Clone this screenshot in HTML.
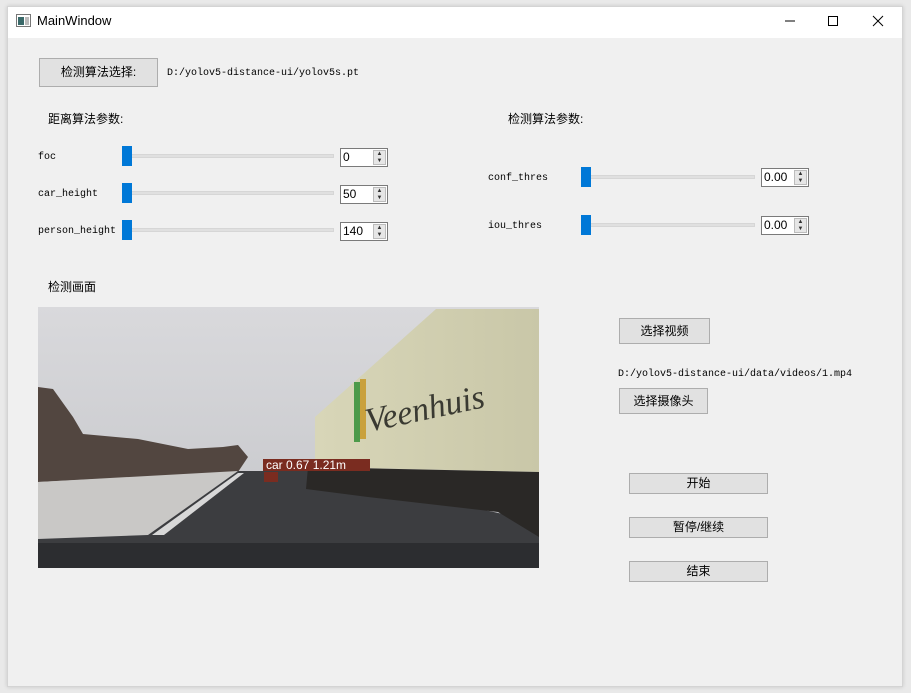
<!DOCTYPE html>
<html><head><meta charset="utf-8"><style>
*{margin:0;padding:0;box-sizing:border-box}
body{width:911px;height:693px;background:#e9e9e9;position:relative;overflow:hidden;font-family:"Liberation Sans","Noto Sans CJK SC",sans-serif;font-size:12px;color:#000}
.win{position:absolute;left:7px;top:6px;width:896px;height:681px;background:#f0f0f0;border:1px solid #d4d4d4;box-shadow:0 0 4px rgba(0,0,0,.15)}
.title{position:absolute;left:0;top:0;width:100%;height:31px;background:#fff}
.a{position:absolute;white-space:nowrap}
.mono{font-family:"Liberation Mono","Noto Sans CJK SC",monospace;font-size:10px}
.btn{position:absolute;background:#e1e1e1;border:1px solid #adadad;text-align:center;font-size:12px}
.h{position:absolute;width:10px;height:20px;background:#0078d7}
.g{position:absolute;height:4px;background:#e0e0e0;border:1px solid #d6d6d6}
.sp{position:absolute;height:19px;background:#fff;border:1px solid #7a7a7a;font-size:12px;padding-left:2px;line-height:17px}
.sp i{position:absolute;right:1px;top:1px;width:13px;height:15px;background:#e6e6e6;border:1px solid #bcbcbc;font-style:normal;font-size:6px;line-height:7px;text-align:center;color:#333}
</style></head><body>
<div class="win">
<div class="title"></div>
</div>
<svg class="a" style="left:16px;top:14px" width="15" height="13"><rect x=".5" y=".5" width="14" height="12" fill="#fff" stroke="#777"/><rect x="2" y="3" width="6" height="8" fill="#3a6a6a"/><rect x="9" y="3" width="4" height="8" fill="#bbb"/></svg>
<div class="a" style="left:37px;top:13px;font-size:13px">MainWindow</div>
<svg class="a" style="left:780px;top:12px" width="110" height="18"><line x1="5" y1="9" x2="15" y2="9" stroke="#000"/><rect x="48.5" y="4.5" width="9" height="9" fill="none" stroke="#000"/><line x1="93" y1="4" x2="103" y2="14" stroke="#000"/><line x1="103" y1="4" x2="93" y2="14" stroke="#000"/></svg>

<div class="btn" style="left:39px;top:58px;width:119px;height:29px;line-height:27px">检测算法选择:</div>
<div class="a mono" style="left:167px;top:68px">D:/yolov5-distance-ui/yolov5s.pt</div>
<div class="a" style="left:48px;top:110px">距离算法参数:</div>
<div class="a" style="left:508px;top:110px">检测算法参数:</div>

<div class="a mono" style="left:38px;top:152px">foc</div>
<div class="g" style="left:130px;top:154px;width:204px"></div><div class="h" style="left:122px;top:146px"></div>
<div class="sp" style="left:340px;top:148px;width:48px">0<i>▲<br>▼</i></div>
<div class="a mono" style="left:38px;top:189px">car_height</div>
<div class="g" style="left:130px;top:191px;width:204px"></div><div class="h" style="left:122px;top:183px"></div>
<div class="sp" style="left:340px;top:185px;width:48px">50<i>▲<br>▼</i></div>
<div class="a mono" style="left:38px;top:226px">person_height</div>
<div class="g" style="left:130px;top:228px;width:204px"></div><div class="h" style="left:122px;top:220px"></div>
<div class="sp" style="left:340px;top:222px;width:48px">140<i>▲<br>▼</i></div>

<div class="a mono" style="left:488px;top:173px">conf_thres</div>
<div class="g" style="left:589px;top:175px;width:166px"></div><div class="h" style="left:581px;top:167px"></div>
<div class="sp" style="left:761px;top:168px;width:48px">0.00<i>▲<br>▼</i></div>
<div class="a mono" style="left:488px;top:221px">iou_thres</div>
<div class="g" style="left:589px;top:223px;width:166px"></div><div class="h" style="left:581px;top:215px"></div>
<div class="sp" style="left:761px;top:216px;width:48px">0.00<i>▲<br>▼</i></div>

<div class="a" style="left:48px;top:278px">检测画面</div>

<svg class="a" style="left:38px;top:307px" width="501" height="261" viewBox="0 0 501 261">
<defs><linearGradient id="sky" x1="0" y1="0" x2="0" y2="1"><stop offset="0" stop-color="#d9d9dc"/><stop offset="1" stop-color="#c4c5c9"/></linearGradient>
<linearGradient id="tr" x1="0" y1="0" x2="1" y2="0"><stop offset="0" stop-color="#d8d6b8"/><stop offset="1" stop-color="#c9c7a8"/></linearGradient></defs>
<rect width="501" height="261" fill="url(#sky)"/>
<path d="M0 80 L15 82 L35 110 L45 127 L100 132 L150 142 L185 140 L200 138 L210 150 L200 165 L0 175Z" fill="#524640"/>
<path d="M0 175 L200 164 L110 228 L0 232Z" fill="#c9c8c6"/>
<path d="M200 164 L270 164 L501 215 L501 238 L0 238 L0 232 L110 228Z" fill="#3c3d40"/>
<path d="M200 166 L206 166 L126 228 L114 228Z" fill="#d8d8d8"/>
<path d="M398 2 L501 2 L501 165 L277 160 L277 110Z" fill="url(#tr)"/>
<path d="M270 160 L501 165 L501 230 L460 205 L330 190 L268 182Z" fill="#2a2826"/>
<rect x="316" y="75" width="6" height="60" fill="#4d9a4a"/><rect x="322" y="72" width="6" height="60" fill="#c9a13c"/>
<text x="330" y="125" font-family="Liberation Serif,serif" font-style="italic" font-size="34" fill="#3a3a32" transform="rotate(-12 330 125)">Veenhuis</text>
<rect x="0" y="236" width="501" height="25" fill="#2c2d30"/>
<rect x="225" y="152" width="107" height="12" fill="#7a2c20"/>
<rect x="226" y="165" width="14" height="10" fill="#7a2c20"/>
<text x="228" y="162" font-family="Liberation Sans,sans-serif" font-size="12" fill="#fff">car 0.67  1.21m</text>
</svg>

<div class="btn" style="left:619px;top:318px;width:91px;height:26px;line-height:24px">选择视频</div>
<div class="a mono" style="left:618px;top:369px">D:/yolov5-distance-ui/data/videos/1.mp4</div>
<div class="btn" style="left:619px;top:388px;width:89px;height:26px;line-height:24px">选择摄像头</div>
<div class="btn" style="left:629px;top:473px;width:139px;height:21px;line-height:19px">开始</div>
<div class="btn" style="left:629px;top:517px;width:139px;height:21px;line-height:19px">暂停/继续</div>
<div class="btn" style="left:629px;top:561px;width:139px;height:21px;line-height:19px">结束</div>
</body></html>
